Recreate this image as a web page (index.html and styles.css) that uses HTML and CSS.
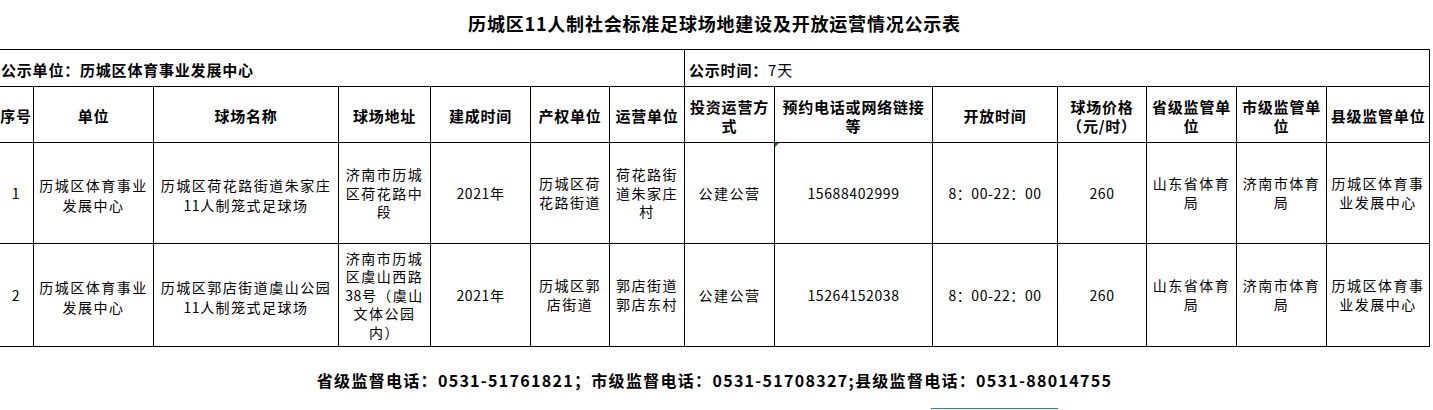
FILE: index.html
```html
<!DOCTYPE html>
<html lang="zh-CN">
<head>
<meta charset="utf-8">
<title>历城区11人制社会标准足球场地建设及开放运营情况公示表</title>
<link rel="stylesheet" href="styles.css">
</head>
<body>
<div class="page">
  <h1 class="title">历城区11人制社会标准足球场地建设及开放运营情况公示表</h1>
  <table class="sheet">
    <colgroup>
      <col class="c1"><col class="c2"><col class="c3"><col class="c4"><col class="c5"><col class="c6"><col class="c7">
      <col class="c8"><col class="c9"><col class="c10"><col class="c11"><col class="c12"><col class="c13"><col class="c14">
    </colgroup>
    <tr class="r-info">
      <td colspan="7" class="info">公示单位：历城区体育事业发展中心</td>
      <td colspan="7" class="info info-time">公示时间：<span class="plain">7天</span></td>
    </tr>
    <tr class="r-head">
      <th>序号</th>
      <th>单位</th>
      <th>球场名称</th>
      <th>球场地址</th>
      <th>建成时间</th>
      <th>产权单位</th>
      <th>运营单位</th>
      <th>投资运营方<br>式</th>
      <th>预约电话或网络链接<br>等</th>
      <th>开放时间</th>
      <th>球场价格<br>（元/时）</th>
      <th>省级监管单<br>位</th>
      <th>市级监管单<br>位</th>
      <th>县级监管单位</th>
    </tr>
    <tr class="r-row1">
      <td class="num">1</td>
      <td class="wide">历城区体育事业<br>发展中心</td>
      <td class="wide">历城区荷花路街道朱家庄<br><span class="num">11</span>人制笼式足球场</td>
      <td class="addr">济南市历城<br>区荷花路中<br>段</td>
      <td class="num">2021年</td>
      <td>历城区荷<br>花路街道</td>
      <td class="addr">荷花路街<br>道朱家庄<br>村</td>
      <td>公建公营</td>
      <td class="num phone"><span class="flag"></span>15688402999</td>
      <td class="num">8：00-22：00</td>
      <td class="num">260</td>
      <td>山东省体育<br>局</td>
      <td>济南市体育<br>局</td>
      <td>历城区体育事<br>业发展中心</td>
    </tr>
    <tr class="r-row2">
      <td class="num">2</td>
      <td class="wide">历城区体育事业<br>发展中心</td>
      <td class="wide">历城区郭店街道虞山公园<br><span class="num">11</span>人制笼式足球场</td>
      <td class="addr">济南市历城<br>区虞山西路<br><span class="num">38</span>号（虞山<br>文体公园<br>内）</td>
      <td class="num">2021年</td>
      <td>历城区郭<br>店街道</td>
      <td>郭店街道<br>郭店东村</td>
      <td>公建公营</td>
      <td class="num">15264152038</td>
      <td class="num">8：00-22：00</td>
      <td class="num">260</td>
      <td>山东省体育<br>局</td>
      <td>济南市体育<br>局</td>
      <td>历城区体育事<br>业发展中心</td>
    </tr>
  </table>
  <p class="footer">省级监督电话：0531-51761821；市级监督电话：0531-51708327;县级监督电话：0531-88014755</p>
  <div class="tab-line"></div>
</div>
</body>
</html>
```
FILE: styles.css
```css
html, body {
  margin: 0;
  padding: 0;
  background: #fff;
  color: #000;
  font-family: "Noto Sans CJK SC", "Noto Sans", sans-serif;
  overflow: hidden;
}

.page {
  width: 1433px;
}

.title {
  margin: 0;
  width: 1429px;
  height: 49px;
  line-height: 47px;
  font-size: 18px;
  font-weight: 700;
  letter-spacing: 0.8px;
  text-align: center;
}

.sheet {
  border-collapse: collapse;
  table-layout: fixed;
  width: 1432px;
  margin-left: -2px;
}

.c1 { width: 35px; }
.c2 { width: 120px; }
.c3 { width: 185px; }
.c4 { width: 92px; }
.c5 { width: 100px; }
.c6 { width: 79px; }
.c7 { width: 75px; }
.c8 { width: 90px; }
.c9 { width: 158px; }
.c10 { width: 125px; }
.c11 { width: 89px; }
.c12 { width: 90px; }
.c13 { width: 90px; }
.c14 { width: 103px; }

.sheet td,
.sheet th {
  border: 1px solid #000;
  padding: 0 1px;
  text-align: center;
  vertical-align: middle;
  white-space: nowrap;
  overflow: hidden;
}

.sheet th {
  font-size: 15px;
  font-weight: 700;
  letter-spacing: 0.8px;
  line-height: 19px;
  padding-top: 2px;
}

.sheet td {
  font-size: 14px;
  font-weight: 400;
  letter-spacing: 1.5px;
  line-height: 19px;
}

.sheet td.wide {
  line-height: 20px;
  padding-top: 3px;
}

.sheet td.addr {
  line-height: 18.5px;
}

.sheet td.num,
.sheet .num {
  letter-spacing: 0.6px;
}

.r-info { height: 37px; }
.r-head { height: 56px; }
.r-row1 { height: 101px; }
.r-row2 { height: 103px; }

.sheet td.info {
  text-align: left;
  font-size: 15px;
  font-weight: 700;
  letter-spacing: 0.8px;
  padding: 3px 2px 0;
}

.sheet td.info-time {
  padding-left: 4px;
}

.plain {
  font-weight: 400;
}

.sheet td.phone {
  position: relative;
}

.flag {
  position: absolute;
  top: 0;
  left: 0;
  width: 0;
  height: 0;
  border-top: 4px solid #0a8a0a;
  border-right: 4px solid transparent;
}

.footer {
  margin: 21px 0 0;
  width: 1429px;
  line-height: 24px;
  font-size: 16px;
  font-weight: 700;
  letter-spacing: 1.3px;
  text-align: center;
}

.tab-line {
  margin: 16px 0 0 931px;
  width: 127px;
  height: 1px;
  background: #2e8b6b;
}
```
